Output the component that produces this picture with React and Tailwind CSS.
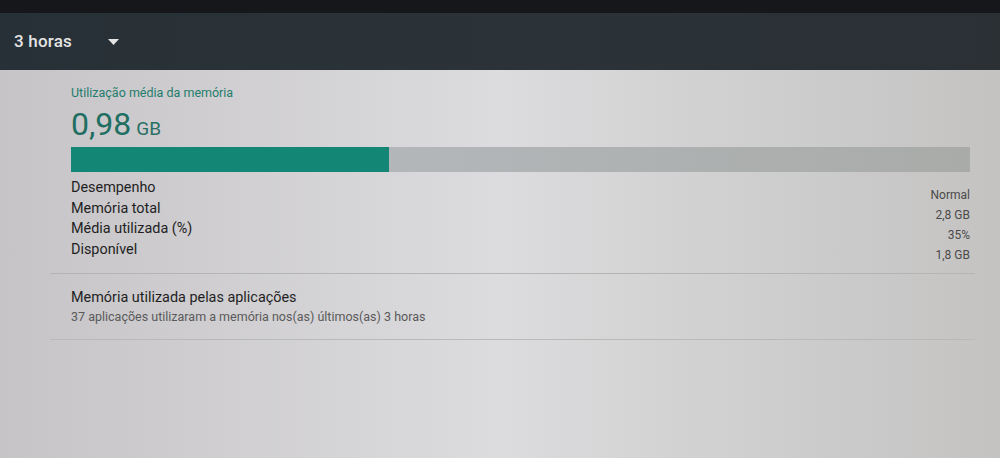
export default function App() {
  const rows = [
    ["Desempenho", "Normal"],
    ["Memória total", "2,8 GB"],
    ["Média utilizada (%)", "35%"],
    ["Disponível", "1,8 GB"],
  ];
  return (
    <div
      className="w-[1000px] h-[458px] overflow-hidden bg-linear-to-r from-[#c6c4c7] via-[#dcdbdd] to-[#c4c3c2]"
      style={{ fontFamily: "Roboto, 'Noto Sans', 'Liberation Sans', sans-serif" }}
    >
      <div className="h-[13px] bg-[#15171a]" />
      <div className="h-[57px] bg-linear-to-r from-[#283037] via-[#2b3339] to-[#2a3034] flex items-center pl-[14px]">
        <span className="text-[17px] font-medium text-[#e4e4e4] tracking-[0.2px]">3 horas</span>
        <svg className="ml-[36px] mt-[1px]" width="11" height="6" viewBox="0 0 11 6">
          <path d="M0 0 L11 0 L5.5 6 Z" fill="#e4e4e4" />
        </svg>
      </div>
      <div className="pl-[50px] pr-[25px]">
        <div className="pl-[21px] pr-[5px] pt-[15px]">
          <div className="text-[12.5px] leading-[16px] text-[#1f7d6d]">Utilização média da memória</div>
          <div className="mt-[3px] h-[40px] flex items-baseline text-[#1e6f62]">
            <span className="text-[32px] leading-[40px]">0,98</span>
            <span className="text-[19px] ml-[5px] text-[#2a6f64]">GB</span>
          </div>
          <div className="mt-[3px] h-[25px] flex bg-linear-to-r from-[#b9bdc2] to-[#a9aba9]">
            <div className="w-[35.4%] bg-[#138676]" />
          </div>
          <div className="mt-[6px] mb-[15px] h-[80px] flex justify-between">
            <div className="text-[14.4px] leading-[20.5px] text-[#1f1f1f]">
              {rows.map(([l]) => (
                <div key={l}>{l}</div>
              ))}
            </div>
            <div className="pt-[7px] text-[12px] leading-[20px] text-[#4a4a4a] text-right">
              {rows.map(([l, v]) => (
                <div key={l}>{v}</div>
              ))}
            </div>
          </div>
        </div>
        <div className="border-t border-[#b4b4b4]" />
        <div className="px-[21px] pt-[14px] pb-[13px]">
          <div className="text-[14.4px] leading-[20px] text-[#1f1f1f]">Memória utilizada pelas aplicações</div>
          <div className="text-[12.5px] leading-[18px] text-[#5a5a5a]">
            37 aplicações utilizaram a memória nos(as) últimos(as) 3 horas
          </div>
        </div>
        <div className="border-t border-[#b9b9b9]" />
      </div>
    </div>
  );
}
